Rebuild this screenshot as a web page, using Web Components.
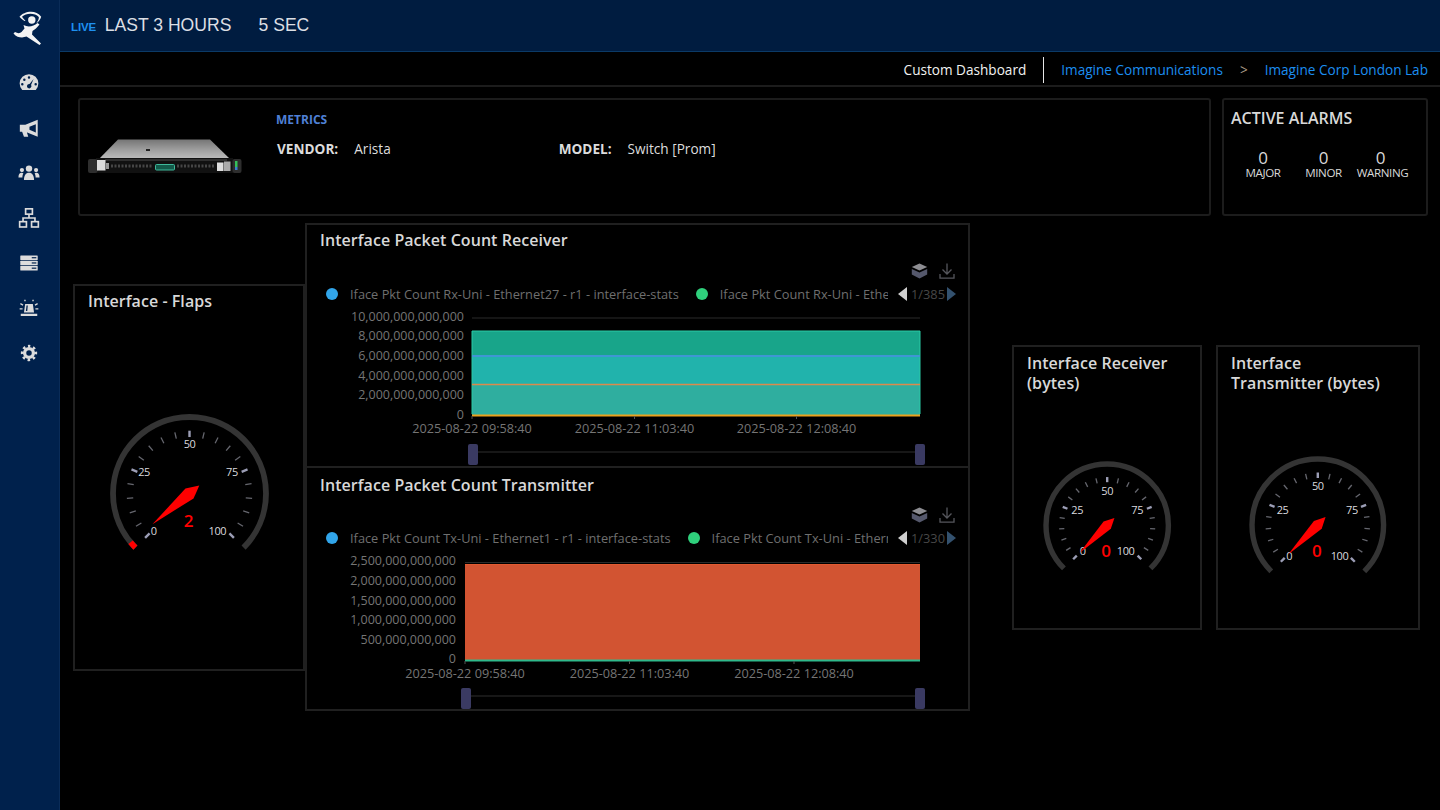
<!DOCTYPE html>
<html><head><meta charset="utf-8"><title>Custom Dashboard</title>
<style>
html,body{margin:0;height:100%;background:#000;overflow:hidden}
body{font-family:"Open Sans","Noto Sans",sans-serif}
</style></head><body>
<dash-app>
  <nav-rail slot="rail"></nav-rail>
  <top-bar slot="main"></top-bar>
  <crumb-bar slot="main"></crumb-bar>
  <info-row slot="main">
    <device-card></device-card>
    <alarm-card></alarm-card>
  </info-row>
  <widget-area slot="main">
    <gauge-panel style="width:232px;height:387px;margin:61px 0 0 13px;--pad:13px;--top:4.500px">
      <span slot="title">Interface - Flaps</span>
      <dial-gauge r="79.5" value="2" lr="0.62" vy="0.345" ldy="2.5" mdy="-3" lx="-1,0,0,-3,-7" style="margin-top:99.5px"></dial-gauge>
    </gauge-panel>
    <div style="display:flex;flex-direction:column;width:665px">
      <chart-panel heading="Interface Packet Count Receiver" l1="Iface Pkt Count Rx-Uni - Ethernet27 - r1 - interface-stats" l2="Iface Pkt Count Rx-Uni - Ethe" page="1/385" kind="rx"></chart-panel>
      <chart-panel heading="Interface Packet Count Transmitter" l1="Iface Pkt Count Tx-Uni - Ethernet1 - r1 - interface-stats" l2="Iface Pkt Count Tx-Uni - Ethern" page="1/330" kind="tx"></chart-panel>
    </div>
    <gauge-panel style="width:190px;height:285px;margin:122px 0 0 42px;--pad:13px;--top:5.500px">
      <span slot="title">Interface Receiver<br>(bytes)</span>
      <dial-gauge r="64.2" value="0" lr="0.54" vy="0.405" ldy="1" mdy="-2" tick="0.75" lx="0,2,0,-2,-6" style="margin-top:64.3px"></dial-gauge>
    </gauge-panel>
    <gauge-panel style="width:204px;height:285px;margin:122px 0 0 14px;--pad:13px;--top:5.500px">
      <span slot="title">Interface<br>Transmitter (bytes)</span>
      <dial-gauge r="68.8" value="0" lr="0.57" vy="0.385" ldy="4" mdy="0" tick="0.76" lx="-1,1,0,-2,-6" style="margin-top:59.2px"></dial-gauge>
    </gauge-panel>
  </widget-area>
</dash-app>
<script>
function def(name, html, init){
  customElements.define(name, class extends HTMLElement{
    connectedCallback(){
      if(this.shadowRoot) return;
      const root=this.attachShadow({mode:'open'});
      root.innerHTML=typeof html==='function'?html(this):html;
      if(init) init(this,root);
    }
  });
}
const F='"Open Sans","Noto Sans",sans-serif';

def('dash-app',`<style>
:host{display:flex;width:1440px;height:810px;background:#000;overflow:hidden}
.rail{flex:0 0 60px;display:flex}
.main{flex:1;display:flex;flex-direction:column;min-width:0}
</style><div class="rail"><slot name="rail"></slot></div><div class="main"><slot name="main"></slot></div>`);

const ICONS=[
 `<path fill-rule="evenodd" d="M4.6 19.6A10.2 10.2 0 1 1 19.4 19.6ZM12 4.6a1.3 1.3 0 1 0 0 2.7 1.3 1.3 0 0 0 0-2.7ZM6.9 7a1.3 1.3 0 1 0 0 2.7 1.3 1.3 0 0 0 0-2.7ZM4.7 12a1.3 1.3 0 1 0 0 2.7 1.3 1.3 0 0 0 0-2.7ZM19.3 12a1.3 1.3 0 1 0 0 2.7 1.3 1.3 0 0 0 0-2.7ZM17 7.500 12.6 13.100a2.4 2.4 0 1 0 1.6 1Z" fill="#dcdcdc"/>`,
 `<path fill="#dcdcdc" d="M2 8.500H8L21.500 3V21.500L8 16H2ZM4.500 16H9.500L11.200 21.500H6.500Z"/><path fill="#00214c" d="M12.500 10.700 19.400 7.800V17L12.500 14Z"/>`,
 `<g fill="#dcdcdc"><circle cx="12" cy="7.200" r="3.500"/><circle cx="4.300" cy="8.800" r="2.300"/><circle cx="19.700" cy="8.800" r="2.300"/><path d="M6.500 19.500C6.500 14.500 8.500 11.600 12 11.600S17.500 14.500 17.500 19.500Z"/><path d="M.5 16.800C.5 13.400 2 11.800 4 11.800 4.800 11.800 5.400 12 5.900 12.500 5.100 13.700 4.800 15.100 4.800 16.800ZM23.500 16.800C23.500 13.400 22 11.800 20 11.800 19.200 11.800 18.600 12 18.100 12.500 18.900 13.700 19.200 15.100 19.200 16.800Z"/></g>`,
 `<g fill="none" stroke="#dcdcdc" stroke-width="1.800"><rect x="8.300" y="2" width="7.400" height="5.800"/><rect x="1.800" y="16" width="7.400" height="5.800"/><rect x="14.800" y="16" width="7.400" height="5.800"/><path d="M12 7.800V12M5.500 16V12H18.500V16"/></g>`,
 `<g fill="#dcdcdc"><rect x="2.500" y="3.800" width="19" height="5" rx=".6"/><rect x="2.500" y="9.500" width="19" height="5" rx=".6"/><rect x="2.500" y="15.200" width="19" height="5" rx=".6"/></g><g fill="#00214c"><rect x="15" y="5.600" width="5" height="1.300"/><rect x="15" y="11.300" width="5" height="1.300"/><rect x="15" y="17" width="5" height="1.300"/></g>`,
 `<g fill="#dcdcdc"><path d="M6.500 17 7.800 7.500H16.200L17.500 17ZM3 18.300H21V20.800H3Z"/></g><path fill="#00214c" d="M9.300 9.200h1.400l-.6 6H8.600Z"/><g stroke="#dcdcdc" stroke-width="1.400" fill="none"><path d="M5.500 8.800 2.600 7.300M18.500 8.800 21.400 7.300M5 13H1.800M19 13H22.200M8 4.700 7.200 3M16 4.700 16.800 3"/></g>`,
 `<g fill="none" stroke="#dcdcdc"><circle cx="12" cy="12" r="4.800" stroke-width="3.600"/><circle cx="12" cy="12" r="7.500" stroke-width="2.800" stroke-dasharray="2.800 3.090" stroke-dashoffset="1.400" transform="rotate(-90 12 12)"/></g>`
];
def('nav-rail',`<style>
:host{display:flex;flex-direction:column;align-items:center;width:60px;height:810px;background:#00214c;border-right:1px solid #0a2c58;box-sizing:border-box;padding-right:1px}
.logo{display:block;margin-top:10px;margin-bottom:26px}
.i{width:22px;height:22px;display:block;margin-bottom:23px}
</style>
<svg class="logo" width="36" height="36" viewBox="0 0 36 36">
 <g fill="#f4f4f4">
  <path d="M13.500 11C11.500 9.500 10 8.500 8.500 6.700 13 1 25-1 30.200 6.700 29.500 9 28 11.500 25.200 13.300 27 11 28 9 27.800 7 24 2.600 15 2.600 11 6.800 12 8.300 13 9.500 14.500 10.500Z"/>
  <circle cx="20.800" cy="10" r="3.700"/>
  <path d="M12.500 15C17 17.500 22.500 16.500 26.500 13L28.500 14.500C26 18 23 20 21.500 21L21 24.500 30 33.500 28.500 35 15.500 26.500 11 27.500C8 27.500 5 26.500 2.500 23.500L4 22C6.500 23.500 9 23.500 10.500 22L13.500 18.500Z"/>
 </g>
</svg>
${ICONS.map(p=>`<svg class="i" viewBox="0 0 24 24">${p}</svg>`).join('')}`);

def('top-bar',`<style>
:host{display:flex;align-items:center;height:52px;flex:none;background:#001c40;border-bottom:1px solid #0b3a66;box-sizing:border-box;padding:0 0 1px 11px;font-family:"Liberation Sans",Arial,sans-serif;color:#dcdfe4}
.live{font-size:11.500px;color:#1e90f0;font-weight:700;margin:4px 8.500px 0 0;letter-spacing:-.1px}
.a{font-size:17.600px;margin-right:27px}
</style><span class="live">LIVE</span><span class="a">LAST 3 HOURS</span><span class="a">5 SEC</span>`);

def('crumb-bar',`<style>
:host{display:flex;align-items:center;justify-content:flex-end;height:35px;flex:none;border-bottom:2px solid #1c1c1c;box-sizing:border-box;padding:2px 12px 0 0;font:13.600px ${F}}
.c{color:#f2f2f2}
.sep{width:1px;height:26px;background:#e6e6e6;margin:0 17px}
.l{color:#1c8ef0}
.g{color:#a89a86;margin:0 17px}
</style><span class="c">Custom Dashboard</span><span class="sep"></span><span class="l">Imagine Communications</span><span class="g">&gt;</span><span class="l">Imagine Corp London Lab</span>`);

def('info-row',`<style>:host{display:flex;flex:none;height:118px;margin:11px 12px 0 18px;gap:11px}</style><slot></slot>`);

def('device-card',`<style>
:host{display:flex;width:1133px;height:118px;box-sizing:border-box;border:2px solid #1c1c1c;border-radius:3px;color:#ddd;font:13.600px ${F}}
svg{flex:none;margin:38px 0 0 6.500px;filter:blur(.35px)}
.col{margin-left:33.500px;padding-top:11px}
.m{color:#4f80d6;font-weight:700;font-size:12px;line-height:17px}
.r{display:flex;margin-top:12px;line-height:18px;padding-left:1px}
b{font-weight:700;color:#dcdcdc}
.v{margin-left:16px}
.gap{width:168px}
</style>
<svg width="156" height="38" viewBox="0 0 156 38">
 <defs><linearGradient id="t" x1="0" x2="0" y1="0" y2="1"><stop offset="0" stop-color="#757575"/><stop offset=".55" stop-color="#a0a0a0"/><stop offset="1" stop-color="#bdbdbd"/></linearGradient></defs>
 <path d="M31 1.500H123L143 21H12Z" fill="url(#t)"/>
 <rect x="59" y="11" width="4" height="2" fill="#222"/>
 <rect x="9" y="20" width="137" height="15" fill="#111"/>
 <rect x="1" y="21" width="9.500" height="14" rx="2" fill="#2e2e2e"/>
 <rect x="145.500" y="21" width="9" height="14" rx="2" fill="#2e2e2e"/>
 <path d="M18 22H140" stroke="#3a3a3a" stroke-width="1.500"/>
 <path d="M24 28H66M90 28H128" stroke="#464646" stroke-width="3" stroke-dasharray="2 1.500"/>
 <rect x="10" y="22" width="8.500" height="10.500" fill="#ddd"/><rect x="19" y="25" width="3" height="6" fill="#999"/>
 <rect x="130" y="24.500" width="6.500" height="8.500" fill="#ddd"/><rect x="137" y="23.500" width="6.500" height="9.500" fill="#aaa"/>
 <rect x="68.500" y="26.500" width="19" height="5.500" rx="1" fill="#135a4a" stroke="#3fb89a"/>
 <rect x="148" y="23" width="2.500" height="6" fill="#35c05a"/><rect x="148" y="29" width="2.500" height="3" fill="#3a7fd0"/>
</svg>
<div class="col"><div class="m">METRICS</div>
<div class="r"><b>VENDOR:</b><span class="v">Arista</span><span class="gap"></span><b>MODEL:</b><span class="v">Switch [Prom]</span></div></div>`);

def('alarm-card',`<style>
:host{display:block;width:206px;height:118px;box-sizing:border-box;border:2px solid #1c1c1c;border-radius:3px;color:#d8d8d8;font-family:${F};padding:8px 0 0 7px}
h3{margin:0;font-size:16px;font-weight:600;line-height:20px;white-space:nowrap}
.s{display:grid;grid-template-columns:61px 60px 58px;margin:22px 0 0 1.500px;text-align:center}
.n{font-size:17px;line-height:16px}
.k{font-size:11.600px;line-height:14px;letter-spacing:-.4px;white-space:nowrap}
.w{margin-right:4px}
</style><h3>ACTIVE ALARMS</h3><div class="s">
<div><div class="n">0</div><div class="k">MAJOR</div></div>
<div><div class="n">0</div><div class="k">MINOR</div></div>
<div><div class="n w">0</div><div class="k">WARNING</div></div></div>`);

def('widget-area',`<style>:host{display:flex;align-items:flex-start;flex:none;margin-top:7px}</style><slot></slot>`);

def('gauge-panel',`<style>
:host{display:block;box-sizing:border-box;border:2px solid #202020;flex:none;color:#d8d8d8;font-family:${F}}
.t{padding:var(--top) 0 0 var(--pad);font-size:16px;font-weight:600;line-height:20px;letter-spacing:.05px}
</style><div class="t"><slot name="title"></slot></div><slot></slot>`);

def('dial-gauge','',(el,root)=>{
  const R=+el.getAttribute('r'),val=+el.getAttribute('value'),lr=+el.getAttribute('lr'),vy=+el.getAttribute('vy');
  const ldy=+el.getAttribute('ldy'),mdy=+el.getAttribute('mdy'),fs=11;
  const lx=el.getAttribute('lx').split(',').map(Number);
  const tk=+(el.getAttribute('tick')||0.79);
  const P=(a,r)=>{const t=a*Math.PI/180;return [r*Math.cos(t),-r*Math.sin(t)]};
  const pf=p=>p[0].toFixed(2)+' '+p[1].toFixed(2);
  const ar=R-3;
  const ang=v=>225-v*2.7;
  let s='';
  const a0=P(225,ar),a1=P(-45,ar);
  s+=`<path d="M${pf(a0)}A${ar} ${ar} 0 1 1 ${pf(a1)}" fill="none" stroke="#343434" stroke-width="${R>70?5.8:5.4}"/>`;
  if(val>0){s+=`<path d="M${pf(a0)}A${ar} ${ar} 0 0 1 ${pf(P(ang(val),ar))}" fill="none" stroke="#f00" stroke-width="5.800"/>`;}
  for(let i=0;i<=20;i++){
    const a=225-13.5*i,maj=i%5===0;
    const p1=P(a,R*tk),p2=P(a,R*(tk-.08));
    s+=`<line x1="${p1[0].toFixed(2)}" y1="${p1[1].toFixed(2)}" x2="${p2[0].toFixed(2)}" y2="${p2[1].toFixed(2)}" stroke="${maj?'#9c9eb6':'#66676f'}" stroke-width="${maj?2.400:1.300}"/>`;
  }
  [0,25,50,75,100].forEach((v,i)=>{
    const p=P(ang(v),R*lr);
    const dy=(v===0||v===100)?ldy:(v===25||v===75)?mdy:0;
    s+=`<text x="${(p[0]+lx[i]).toFixed(1)}" y="${(p[1]+dy+fs*.36).toFixed(1)}" text-anchor="middle" font-size="${fs}" letter-spacing="-.4" fill="#d9d9de" font-family='${F}'>${v}</text>`;
  });
  const a=ang(val);
  const tip=P(a,R*.605),tail=P(a+180,R*.16),s1=P(a+90,R*.08),s2=P(a-90,R*.08);
  s+=`<polygon points="${[tip,s1,tail,s2].map(q=>q[0].toFixed(2)+','+q[1].toFixed(2)).join(' ')}" fill="#f00"/>`;
  s+=`<text x="-1" y="${(R*vy+6).toFixed(1)}" text-anchor="middle" font-size="17" font-weight="600" fill="#f00" font-family='${F}'>${val}</text>`;
  const W=2*R+8,H=R+4+R*.86;
  root.innerHTML=`<style>:host{display:block}svg{display:block;margin:0 auto}</style><svg width="${W}" height="${H}" viewBox="${-W/2} ${-R-4} ${W} ${H}">${s}</svg>`;
});

const TOOL=`<svg width="46" height="18" viewBox="0 0 46 18">
<path d="M8.500 1.500 16.200 5 8.500 8.500 .8 5Z" fill="#8d8d92"/>
<path d="M.8 7 8.500 10.500 16.200 7V12.500L8.500 16.500 .8 12.500Z" fill="#55586c"/>
<path d="M36 1.500V11.500M31.500 7.500 36 12 40.500 7.500M29 12V16.200H43V12" fill="none" stroke="#55565c" stroke-width="1.300"/>
</svg>`;
def('chart-panel','',(el,root)=>{
  const rx=el.getAttribute('kind')==='rx';
  const ox=307,oy=rx?305:549;
  const Y=rx?[['10,000,000,000,000',316],['8,000,000,000,000',335],['6,000,000,000,000',355.500],['4,000,000,000,000',375],['2,000,000,000,000',394.500],['0',414]]
            :[['2,500,000,000,000',560.500],['2,000,000,000,000',580],['1,500,000,000,000',600],['1,000,000,000,000',619.500],['500,000,000,000',639],['0',658.500]];
  const yr=rx?464:456,x0=rx?472:465,x1=920;
  const X=rx?[472,634.500,796.500]:[465,629.500,794];
  const ly=rx?428:673, sl=rx?452:696;
  const xl=['2025-08-22 09:58:40','2025-08-22 11:03:40','2025-08-22 12:08:40'];
  let s='';
  Y.forEach(y=>s+=`<text x="${yr}" y="${y[1]+4.500}" text-anchor="end">${y[0]}</text>`);
  const gridY=rx?318:562.500;
  s+=`<line x1="${x0}" x2="${x1}" y1="${gridY}" y2="${gridY}" stroke="#2a2a2a"/>`;
  if(rx){
    s+=`<rect x="${x0}" y="331" width="${x1-x0}" height="25" fill="#18a58a"/>
        <rect x="${x0}" y="356" width="${x1-x0}" height="28.500" fill="#21b3ac"/>
        <rect x="${x0}" y="384.500" width="${x1-x0}" height="31" fill="#2fae9f"/>
        <line x1="${x0}" x2="${x0}" y1="331" y2="414" stroke="#2bcba6"/><line x1="${x1}" x2="${x1}" y1="331" y2="414" stroke="#2bcba6"/>
        <line x1="${x0}" x2="${x1}" y1="331" y2="331" stroke="#2bcba6" stroke-width="1.200"/>
        <line x1="${x0}" x2="${x1}" y1="356" y2="356" stroke="#3f96d4" stroke-width="2"/>
        <line x1="${x0}" x2="${x1}" y1="384.500" y2="384.500" stroke="#dc8a4c" stroke-width="1.300"/>
        <line x1="${x0}" x2="${x1}" y1="415.500" y2="415.500" stroke="#eaa21f" stroke-width="2"/>`;
  }else{
    s+=`<rect x="${x0}" y="564" width="${x1-x0}" height="96" fill="#d25432"/>
        <line x1="${x0}" x2="${x1}" y1="564.500" y2="564.500" stroke="#e35a30"/>
        <line x1="${x0}" x2="${x1}" y1="660.500" y2="660.500" stroke="#2fb98c" stroke-width="1.800"/>`;
  }
  X.forEach((x,i)=>{s+=`<line x1="${x}" x2="${x}" y1="${ly-12}" y2="${ly-9}" stroke="#555"/><text x="${x}" y="${ly+4.500}" text-anchor="middle" font-size="12.700">${xl[i]}</text>`});
  const hl=rx?473:466,hr=920;
  s+=`<line x1="${hl}" x2="${hr}" y1="${sl}" y2="${sl}" stroke="#2e2e2e"/>
      <rect x="${hl-5}" y="${sl-8}" width="10" height="21" rx="2" fill="#3a3a62"/>
      <rect x="${hr-5}" y="${sl-8}" width="10" height="21" rx="2" fill="#3a3a62"/>`;
  const w=661,h=160;
  root.innerHTML=`<style>
:host{display:block;width:665px;box-sizing:border-box;border:2px solid #202020;font-family:${F};color:#d8d8d8;flex:none}
:host([kind=rx]){height:243px;border-bottom-width:0}
:host([kind=tx]){height:245px}
h2{margin:0;padding:5px 0 0 13px;font-size:16px;font-weight:600;line-height:20px;letter-spacing:.05px}
:host([kind=tx]) h2{padding-top:6.500px}
.tools{display:flex;justify-content:flex-end;height:18px;margin-top:12px;padding-right:11px}
:host([kind=tx]) .tools{margin-top:11.500px}
.tools svg{display:block}
.lg{display:flex;align-items:center;height:18px;margin-top:5px;padding-left:19px;font-size:12.800px;color:#6f6f6f}
.items{display:flex;align-items:center;flex:0 0 562px;overflow:hidden;white-space:nowrap}
.d{flex:none;width:12px;height:12px;border-radius:50%;margin-right:12px}
.it{flex:none;margin-right:17px}
.pg{display:flex;align-items:center;margin-left:10px;color:#474747}
.pg i{display:block;width:0;height:0;border-top:7.500px solid transparent;border-bottom:7.500px solid transparent}
.pv{border-right:9.500px solid #cfcfcf;margin-right:4px}
.nx{border-left:9.500px solid #33516e;margin-left:2px}
svg.p{display:block;margin-top:2px;margin-bottom:-2px;font-size:12.500px;fill:#757575}
</style>
<h2>${el.getAttribute('heading')}</h2>
<div class="tools">${TOOL}</div>
<div class="lg"><div class="items"><span class="d" style="background:#31a5ea"></span><span class="it">${el.getAttribute('l1')}</span><span class="d" style="background:#2fd07c"></span><span class="it">${el.getAttribute('l2')}</span></div>
<div class="pg"><i class="pv"></i><span>${el.getAttribute('page')}</span><i class="nx"></i></div></div>
<svg class="p" width="${w}" height="${h}" viewBox="${ox} ${oy} ${w} ${h}">${s}</svg>`;
});
</script>
</body></html>
